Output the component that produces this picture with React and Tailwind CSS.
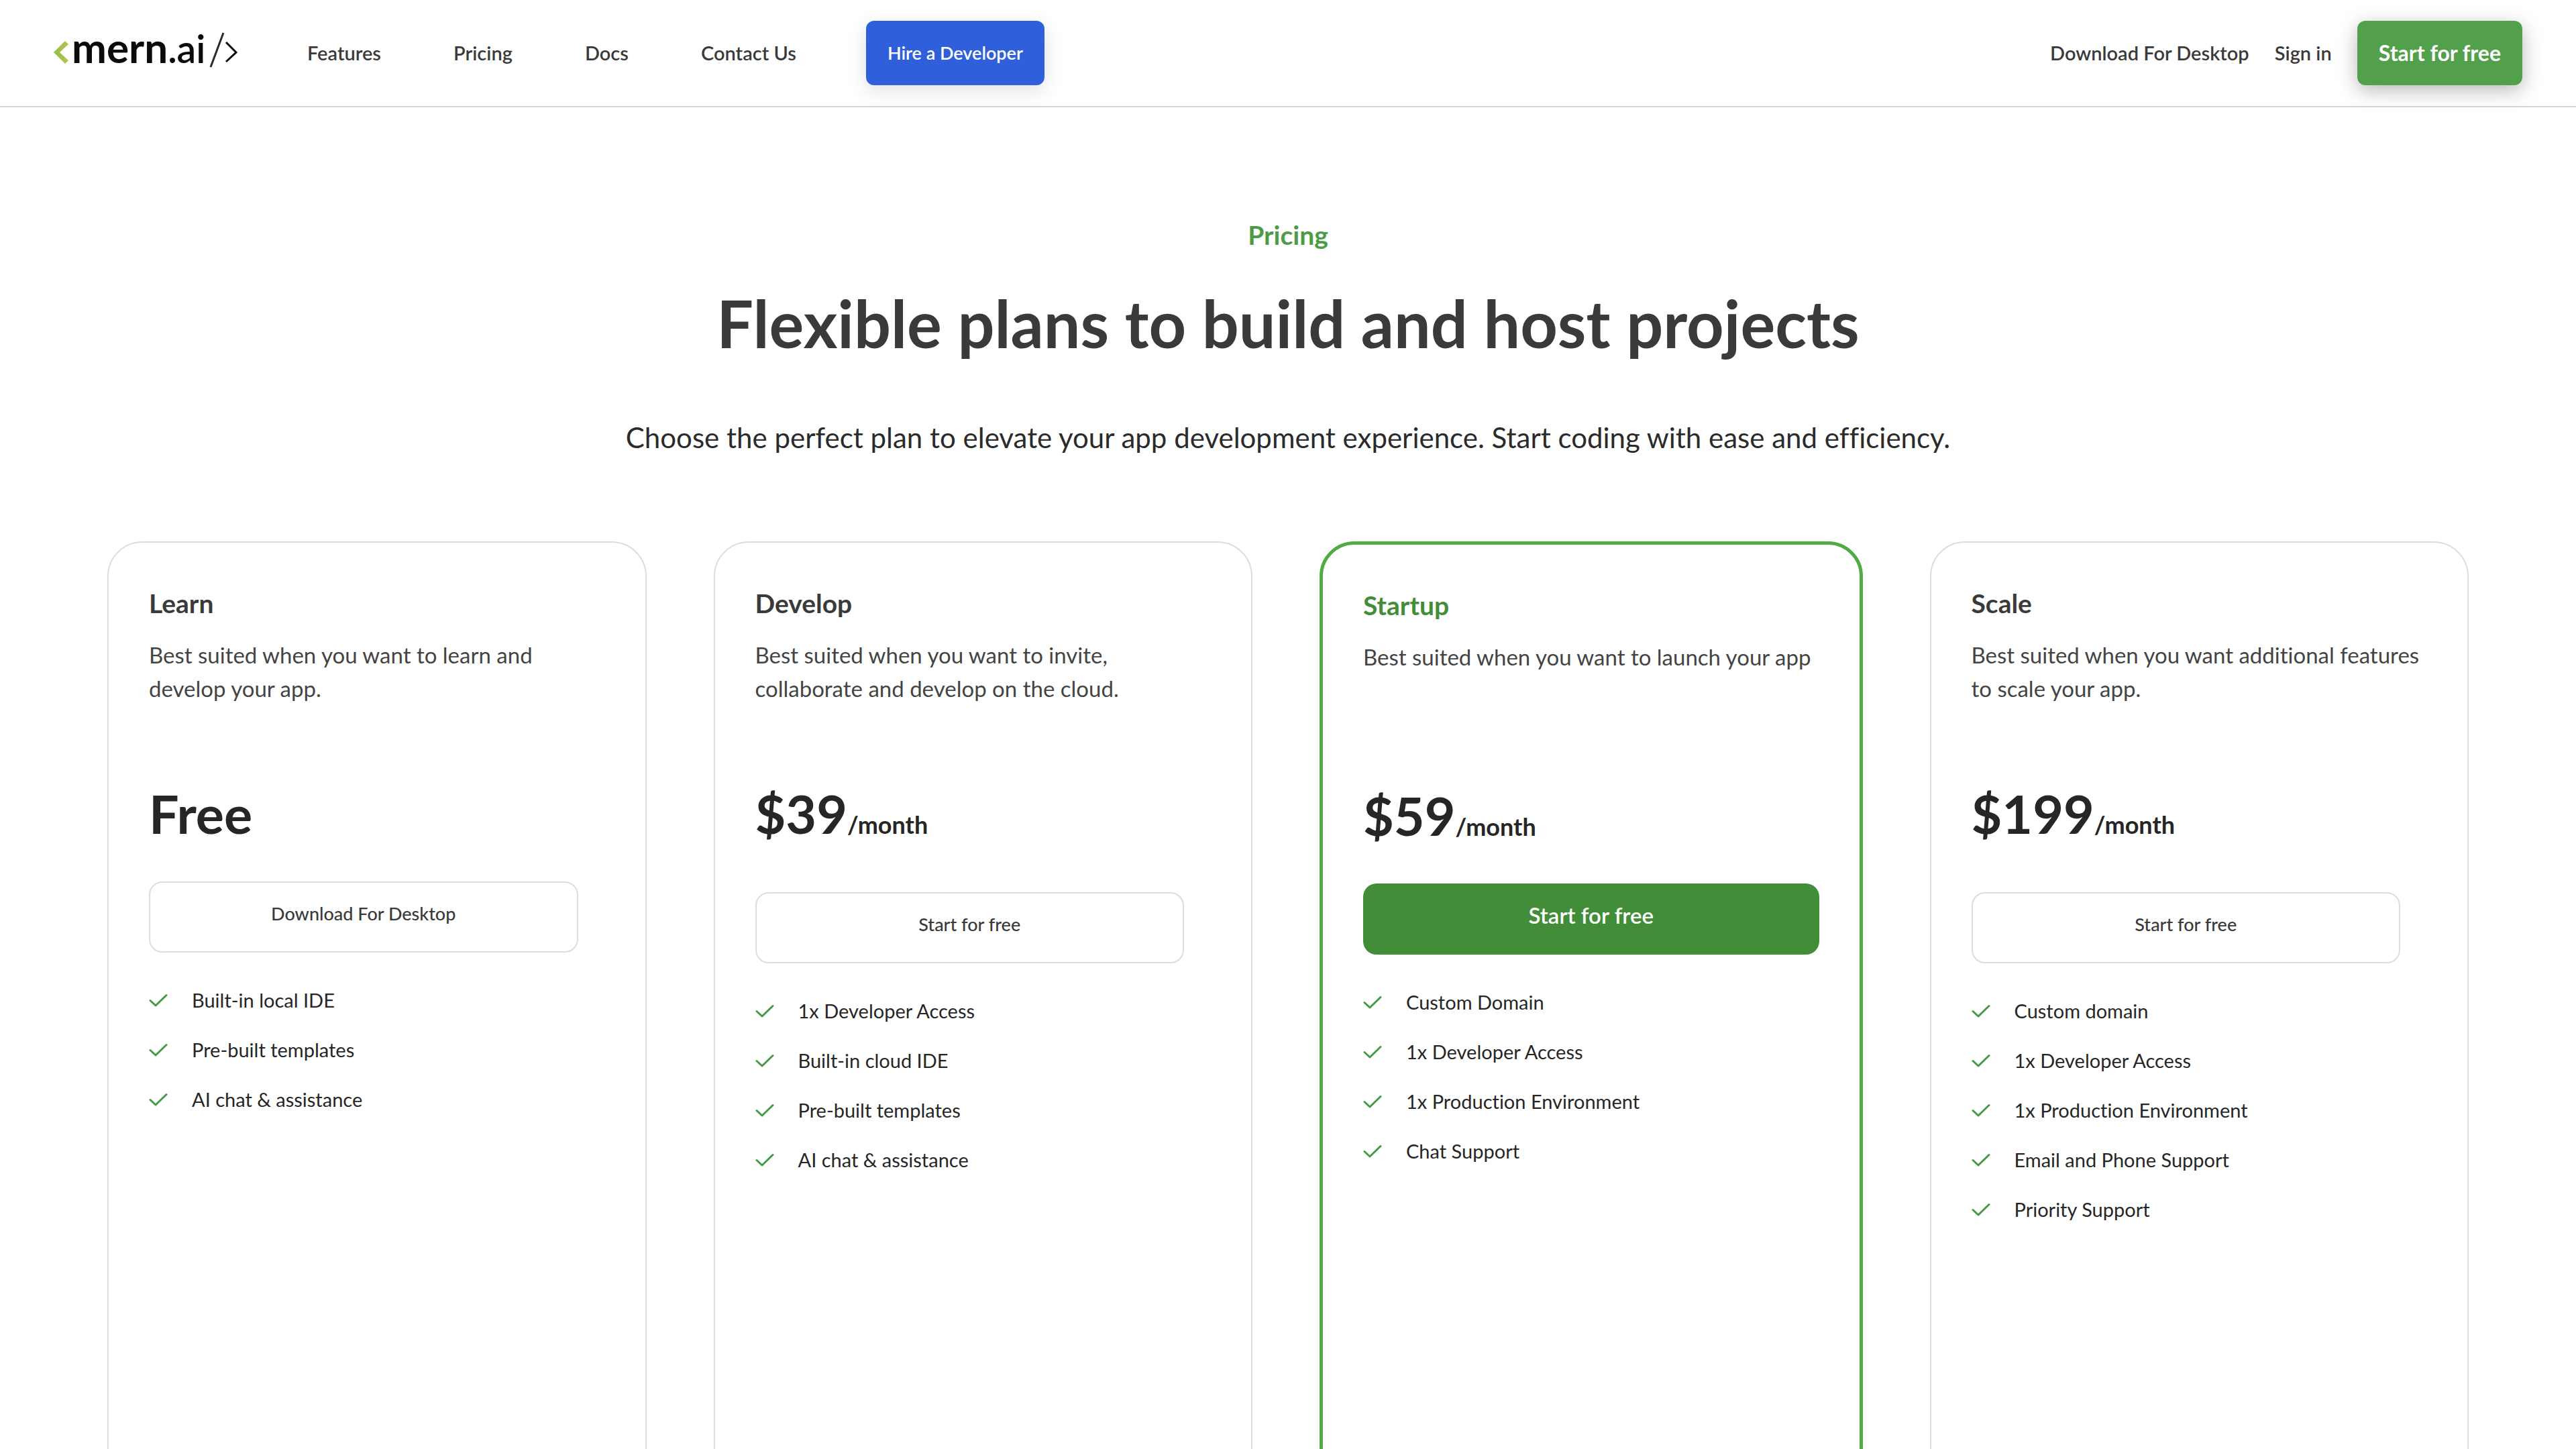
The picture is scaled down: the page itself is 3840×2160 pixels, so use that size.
import React from "react";

const NAV_LINKS = ["Features", "Pricing", "Docs", "Contact Us"];

const PLANS = [
  {
    name: "Learn",
    description: "Best suited when you want to learn and develop your app.",
    price: "Free",
    action: "Download For Desktop",
    features: ["Built-in local IDE", "Pre-built templates", "AI chat & assistance"],
  },
  {
    name: "Develop",
    description: "Best suited when you want to invite, collaborate and develop on the cloud.",
    price: "$39",
    period: "/month",
    action: "Start for free",
    features: ["1x Developer Access", "Built-in cloud IDE", "Pre-built templates", "AI chat & assistance"],
  },
  {
    name: "Startup",
    description: "Best suited when you want to launch your app",
    price: "$59",
    period: "/month",
    action: "Start for free",
    highlighted: true,
    features: ["Custom Domain", "1x Developer Access", "1x Production Environment", "Chat Support"],
  },
  {
    name: "Scale",
    description: "Best suited when you want additional features to scale your app.",
    price: "$199",
    period: "/month",
    action: "Start for free",
    features: [
      "Custom domain",
      "1x Developer Access",
      "1x Production Environment",
      "Email and Phone Support",
      "Priority Support",
    ],
  },
];

function Logo() {
  return (
    <svg width="274" height="96" viewBox="0 -16 274 96" role="img" aria-label="mern.ai">
      <defs>
        <linearGradient id="bracket" x1="0" y1="0" x2="1" y2="0">
          <stop offset="0" stopColor="#8bc34a" />
          <stop offset="1" stopColor="#bfbf4f" />
        </linearGradient>
      </defs>
      <path d="M17 14 L22 19 L9 31 L22 43 L17 48 L0 31 Z" fill="url(#bracket)" />
      <text x="27" y="47" fill="#0b0b0b" fontSize="62">
        <tspan className="font-bold">mern</tspan>
        <tspan fontSize="57">.ai</tspan>
      </text>
      <path d="M253 2 L234 53" stroke="#2b2b2b" strokeWidth="3" fill="none" />
      <path d="M257 16 L272 31 L257 45" stroke="#0b0b0b" strokeWidth="3" fill="none" />
    </svg>
  );
}

function CheckMark() {
  return (
    <svg width="28" height="20" viewBox="0 0 28 20" fill="none" aria-hidden="true" className="shrink-0">
      <path
        d="M2 10.500 L10 18 L26 2.500"
        stroke="#469a45"
        strokeWidth="3"
        strokeLinecap="round"
        strokeLinejoin="round"
      />
    </svg>
  );
}

function Header() {
  return (
    <header className="flex h-40 items-center justify-between border-b-2 border-[#d6d6d6] px-20 text-[29px] leading-9 font-semibold text-[#3a3a3a]">
      <div className="flex items-center">
        <a href="#home">
          <Logo />
        </a>
        <nav className="ml-26 flex items-center gap-27">
          {NAV_LINKS.map((label) => (
            <a key={label} href="#">
              {label}
            </a>
          ))}
        </nav>
        <button
          type="button"
          className="ml-26 h-24 rounded-xl bg-[#305fdb] px-8 text-[27px] text-white shadow-[0_8px_30px_rgba(0,0,0,0.12)]"
        >
          Hire a Developer
        </button>
      </div>
      <div className="flex items-center">
        <a href="#download">Download For Desktop</a>
        <a href="#signin" className="mx-[38px]">
          Sign in
        </a>
        <button
          type="button"
          className="h-24 rounded-xl bg-[#52a04b] px-8 text-[32px] font-bold text-white shadow-[0_8px_30px_rgba(0,0,0,0.28)]"
        >
          Start for free
        </button>
      </div>
    </header>
  );
}

function PlanCard({ plan }) {
  const { name, description, price, period, action, highlighted, features } = plan;
  return (
    <article
      className={
        "min-h-[1500px] flex-1 rounded-t-[52px] px-15 pt-[66px] " +
        (highlighted ? "border-[5px] border-[#4fac43]" : "border-2 border-[#dddddd]")
      }
    >
      <h2
        className={
          "text-[39px] leading-[48px] font-bold " + (highlighted ? "text-[#418d38]" : "text-[#3a3a3a]")
        }
      >
        {name}
      </h2>
      <p className="mt-7 min-h-[100px] text-[33px] leading-[50px] text-[#444444]">{description}</p>
      <p className="mt-[114px] text-[79px] leading-[96px] font-bold text-[#262626]">
        {price}
        {period && <span className="text-[36px] leading-none">{period}</span>}
      </p>
      <button
        type="button"
        className={
          "block h-[106px] rounded-[20px] pb-2.5 " +
          (highlighted
            ? "mt-[53px] w-full bg-[#418d38] text-[33px] font-semibold text-white"
            : "w-[calc(100%-40px)] border-2 border-[#dddddd] text-[27px] font-medium text-[#3a3a3a] " +
              (period ? "mt-[69px]" : "mt-[53px]"))
        }
      >
        {action}
      </button>
      <ul className="mt-[53px] flex flex-col gap-[38px] text-[29px] leading-9 text-[#262626]">
        {features.map((feature) => (
          <li key={feature} className="flex items-center gap-9">
            <CheckMark />
            {feature}
          </li>
        ))}
      </ul>
    </article>
  );
}

export default function App() {
  return (
    <div className="h-screen overflow-hidden bg-white font-['Lato',sans-serif] [font-variant-ligatures:none]">
      <Header />
      <main className="px-40 pt-[166px]">
        <div className="text-center">
          <p className="text-[39px] leading-[48px] font-bold text-[#4a9c45]">Pricing</p>
          <h1 className="mt-[50px] text-[97px] leading-[116px] font-bold text-[#3a3a3a]">
            Flexible plans to build and host projects
          </h1>
          <p className="mt-20 text-[42px] leading-[64px] text-[#2b2b2b]">
            Choose the perfect plan to elevate your app development experience. Start coding with ease and
            efficiency.
          </p>
        </div>
        <section className="mt-[123px] flex gap-25">
          {PLANS.map((plan) => (
            <PlanCard key={plan.name} plan={plan} />
          ))}
        </section>
      </main>
    </div>
  );
}
